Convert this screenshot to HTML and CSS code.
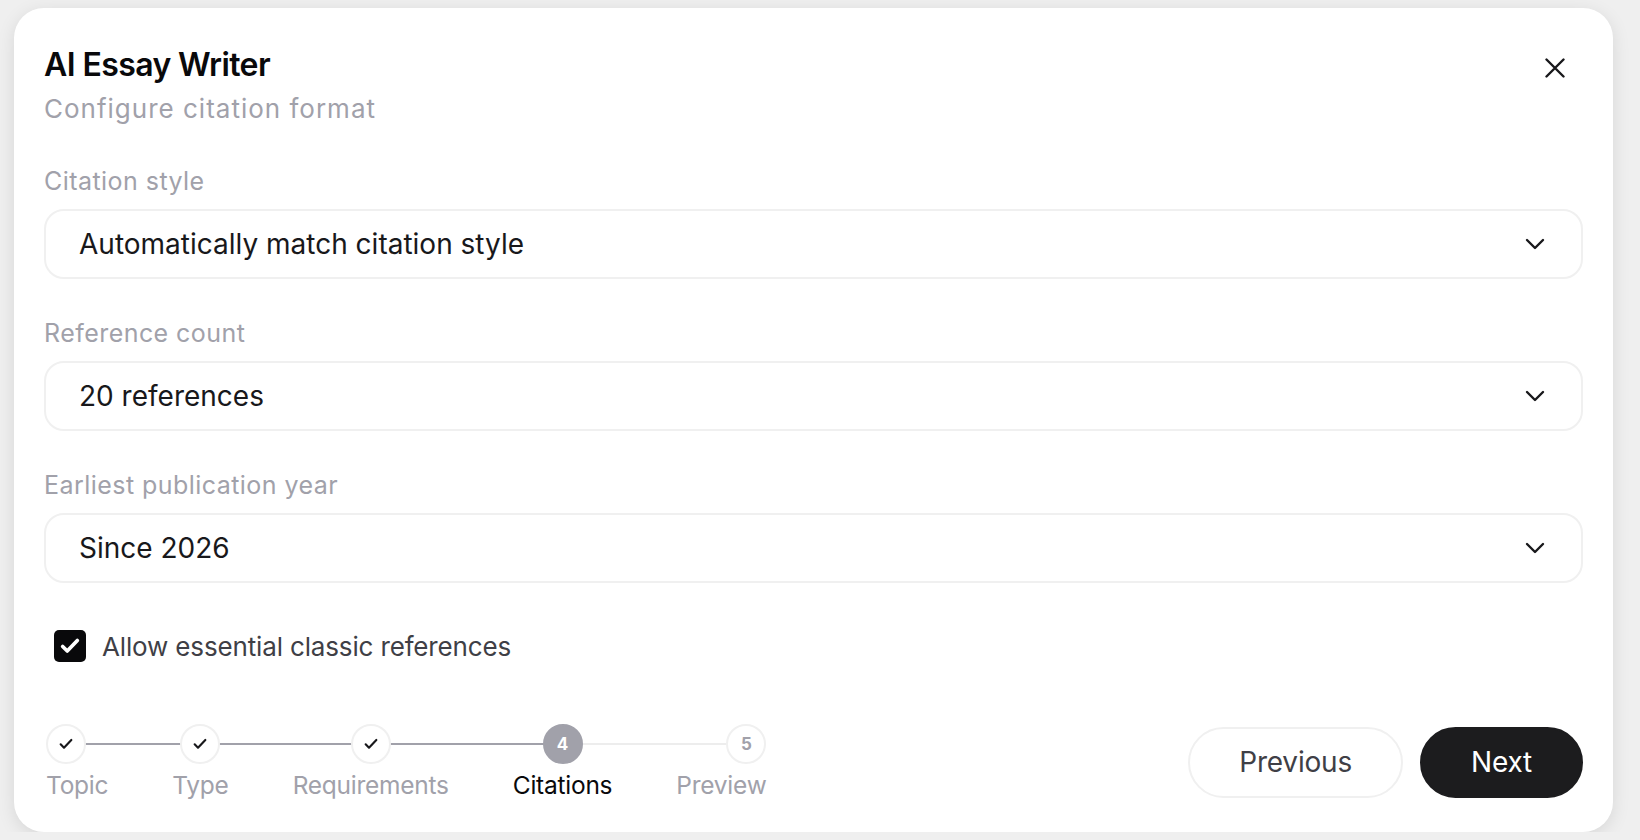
FILE: index.html
```html
<!DOCTYPE html>
<html lang="en">
<head>
    <meta charset="UTF-8">
    <meta name="viewport" content="width=device-width, initial-scale=1.0">
    <title>AI Essay Writer</title>
    <link rel="stylesheet" href="styles.css">
</head>
<body>

<div class="card">
    <div class="header">
        <div class="heading">
            <h1 class="title">AI Essay Writer</h1>
            <p class="subtitle">Configure citation format</p>
        </div>
        <button class="close" aria-label="Close">
            <svg width="20" height="20" viewBox="0 0 20 20" fill="none" stroke="currentColor" stroke-width="2.4" stroke-linecap="round">
                <path d="M1.5 1.5l17 17M18.5 1.5l-17 17"/>
            </svg>
        </button>
    </div>

    <div class="field first">
        <div class="label">Citation style</div>
        <button class="select">
            <span>Automatically match citation style</span>
            <svg width="32" height="32" viewBox="0 0 24 24" fill="none" stroke="currentColor" stroke-width="1.8" stroke-linecap="round" stroke-linejoin="round"><path d="m6 9 6 6 6-6"/></svg>
        </button>
    </div>

    <div class="field">
        <div class="label">Reference count</div>
        <button class="select">
            <span>20 references</span>
            <svg width="32" height="32" viewBox="0 0 24 24" fill="none" stroke="currentColor" stroke-width="1.8" stroke-linecap="round" stroke-linejoin="round"><path d="m6 9 6 6 6-6"/></svg>
        </button>
    </div>

    <div class="field">
        <div class="label">Earliest publication year</div>
        <button class="select">
            <span>Since 2026</span>
            <svg width="32" height="32" viewBox="0 0 24 24" fill="none" stroke="currentColor" stroke-width="1.8" stroke-linecap="round" stroke-linejoin="round"><path d="m6 9 6 6 6-6"/></svg>
        </button>
    </div>

    <label class="check-row">
        <span class="checkbox">
            <svg width="22" height="22" viewBox="0 0 24 24" fill="none" stroke="#fff" stroke-width="4" stroke-linecap="round" stroke-linejoin="round"><path d="M4 12.5l5 5L20 6"/></svg>
        </span>
        Allow essential classic references
    </label>

    <div class="footer">
        <div class="steps">
            <div class="step done">
                <div class="dot"><svg width="16" height="16" viewBox="0 0 24 24" fill="none" stroke="currentColor" stroke-width="3.2" stroke-linecap="round" stroke-linejoin="round"><path d="M4 12.5l5 5L20 6"/></svg></div>
                <div class="step-name">Topic</div>
            </div>
            <div class="step done">
                <div class="dot"><svg width="16" height="16" viewBox="0 0 24 24" fill="none" stroke="currentColor" stroke-width="3.2" stroke-linecap="round" stroke-linejoin="round"><path d="M4 12.5l5 5L20 6"/></svg></div>
                <div class="step-name">Type</div>
            </div>
            <div class="step done">
                <div class="dot"><svg width="16" height="16" viewBox="0 0 24 24" fill="none" stroke="currentColor" stroke-width="3.2" stroke-linecap="round" stroke-linejoin="round"><path d="M4 12.5l5 5L20 6"/></svg></div>
                <div class="step-name">Requirements</div>
            </div>
            <div class="step active">
                <div class="dot">4</div>
                <div class="step-name">Citations</div>
            </div>
            <div class="step todo">
                <div class="dot">5</div>
                <div class="step-name">Preview</div>
            </div>
        </div>
        <div class="actions">
            <button class="btn btn-outline">Previous</button>
            <button class="btn btn-dark">Next</button>
        </div>
    </div>
</div>

</body>
</html>
```

FILE: styles.css
```css
body {
    margin: 0;
    background-color: #efefef;
    font-family: Inter, "Noto Sans", sans-serif;
    color: #18181b;
}
button {
    font-family: inherit;
}
.card {
    box-sizing: border-box;
    width: 1599px;
    height: 824px;
    margin: 8px 0 0 14px;
    padding: 32px 30px;
    background-color: #fff;
    border-radius: 30px;
    box-shadow: 0 4px 18px rgba(0, 0, 0, 0.10);
    display: flex;
    flex-direction: column;
}
.header {
    display: flex;
    justify-content: space-between;
    align-items: flex-start;
}
.heading {
    margin-top: 5px;
}
.title {
    margin: 0;
    font-size: 32px;
    line-height: 40px;
    font-weight: 600;
    letter-spacing: -0.6px;
    color: #09090b;
}
.subtitle {
    margin: 8px 0 0;
    font-size: 26px;
    line-height: 32px;
    color: #a1a1aa;
    letter-spacing: 1px;
}
.close {
    width: 40px;
    height: 40px;
    margin: 8px 8px 0 0;
    padding: 0;
    border: none;
    background: none;
    color: #18181b;
    display: flex;
    align-items: center;
    justify-content: center;
    cursor: pointer;
}
.field {
    margin-top: 38px;
}
.field.first {
    margin-top: 40px;
}
.label {
    font-size: 25px;
    line-height: 32px;
    color: #a1a1aa;
    letter-spacing: 0.45px;
    margin-bottom: 12px;
}
.select {
    box-sizing: border-box;
    width: 100%;
    height: 70px;
    padding: 0 30px 0 33px;
    border: 2px solid #f0f0f0;
    border-radius: 20px;
    background-color: #fff;
    display: flex;
    align-items: center;
    justify-content: space-between;
    font-size: 28px;
    color: #18181b;
    letter-spacing: 0;
    cursor: pointer;
}
.check-row {
    margin-top: 47px;
    padding-left: 10px;
    display: flex;
    align-items: center;
    gap: 16px;
    font-size: 26px;
    color: #3f3f46;
    letter-spacing: -0.15px;
}
.checkbox {
    width: 32px;
    height: 32px;
    border-radius: 5px;
    background-color: #09090b;
    display: flex;
    align-items: center;
    justify-content: center;
}
.footer {
    margin-top: auto;
    display: flex;
    justify-content: space-between;
    align-items: center;
}
.steps {
    display: flex;
    gap: 64px;
    padding-left: 2px;
}
.step {
    position: relative;
    display: flex;
    flex-direction: column;
    align-items: center;
    gap: 6px;
}
.step:first-child {
    align-items: flex-start;
}
.step:last-child {
    align-items: flex-end;
}
.step::before {
    content: '';
    position: absolute;
    top: 19px;
    left: -32px;
    right: -32px;
    height: 2px;
    background-color: #a1a1aa;
}
.step:first-child::before {
    left: 20px;
}
.step:last-child::before {
    right: 20px;
}
.step.active::before {
    background: linear-gradient(to right, #a1a1aa 50%, #ededed 50%);
}
.step.todo::before {
    background-color: #ededed;
}
.dot {
    position: relative;
    z-index: 1;
    box-sizing: border-box;
    width: 40px;
    height: 40px;
    border-radius: 50%;
    border: 2px solid #f0f0f0;
    background-color: #fff;
    display: flex;
    align-items: center;
    justify-content: center;
    font-size: 17px;
    font-weight: 700;
    color: #a1a1aa;
}
.step.done .dot {
    color: #18181b;
}
.step.active .dot {
    background-color: #a1a1aa;
    border-color: #a1a1aa;
    color: #fff;
}
.step-name {
    font-size: 24.5px;
    line-height: 30px;
    color: #a1a1aa;
    letter-spacing: -0.25px;
    white-space: nowrap;
}
.step.active .step-name {
    color: #09090b;
}
.actions {
    display: flex;
    gap: 17px;
}
.btn {
    box-sizing: border-box;
    height: 71px;
    padding: 0 49px;
    border-radius: 36px;
    font-size: 28px;
    letter-spacing: -0.2px;
    cursor: pointer;
}
.btn-outline {
    background-color: #fff;
    border: 2px solid #f0f0f0;
    color: #3f3f46;
}
.btn-dark {
    background-color: #1c1c1e;
    border: 2px solid #1c1c1e;
    color: #fff;
}
```
